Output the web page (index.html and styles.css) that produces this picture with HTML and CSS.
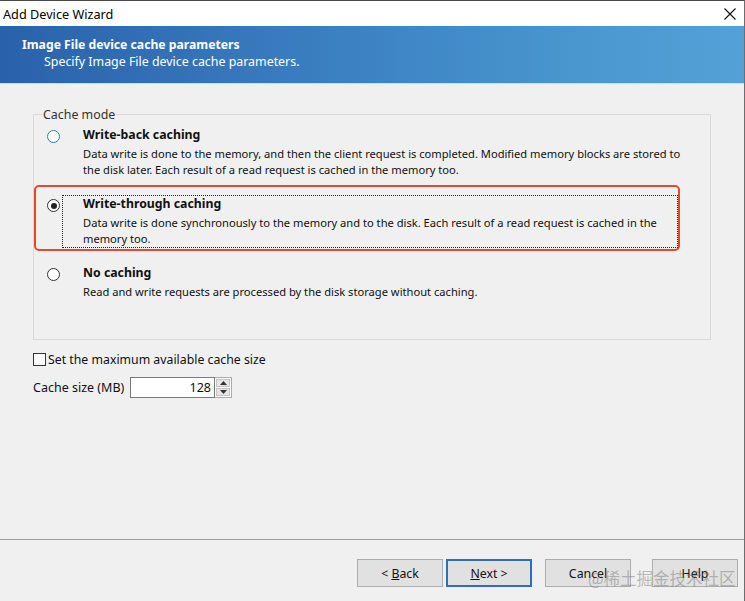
FILE: index.html
```html
<!DOCTYPE html>
<html>
<head>
<meta charset="utf-8">
<title>Add Device Wizard</title>
<link rel="stylesheet" href="styles.css">
</head>
<body>
<div class="window">
  <div class="titlebar">
    <span class="titlebar-text">Add Device Wizard</span>
    <svg class="close" width="12" height="12" viewBox="0 0 12 12"><path d="M0.5 0.5 L11.5 11.5 M11.5 0.5 L0.5 11.5" stroke="#111" stroke-width="1.1" fill="none"/></svg>
  </div>

  <div class="banner">
    <div class="banner-title">Image File device cache parameters</div>
    <div class="banner-sub">Specify Image File device cache parameters.</div>
  </div>

  <div class="content">
    <fieldset class="group">
      <legend>Cache mode</legend>
      <div class="options">
        <div class="option">
          <span class="radio radio-hover"></span>
          <div class="option-text">
            <div class="option-title">Write-back caching</div>
            <div class="option-desc">Data write is done to the memory, and then the client request is completed. Modified memory blocks are stored to<br>the disk later. Each result of a read request is cached in the memory too.</div>
          </div>
        </div>
        <div class="option option-marked">
          <span class="radio radio-checked"></span>
          <div class="option-text option-focus">
            <div class="option-title">Write-through caching</div>
            <div class="option-desc">Data write is done synchronously to the memory and to the disk. Each result of a read request is cached in the<br>memory too.</div>
          </div>
        </div>
        <div class="option">
          <span class="radio"></span>
          <div class="option-text">
            <div class="option-title">No caching</div>
            <div class="option-desc">Read and write requests are processed by the disk storage without caching.</div>
          </div>
        </div>
      </div>
    </fieldset>

    <div class="check-row">
      <span class="checkbox"></span>
      <span>Set the maximum available cache size</span>
    </div>

    <div class="size-row">
      <span class="size-label">Cache size (MB)</span>
      <span class="spin-input">128</span>
      <span class="spinner">
        <span class="spin-btn"><svg width="7" height="4" viewBox="0 0 7 4"><path d="M0 4 L3.5 0 L7 4 Z" fill="#333"/></svg></span>
        <span class="spin-btn"><svg width="7" height="4" viewBox="0 0 7 4"><path d="M0 0 L3.5 4 L7 0 Z" fill="#333"/></svg></span>
      </span>
    </div>
  </div>

  <div class="footer">
    <button class="btn">&lt; <u>B</u>ack</button>
    <button class="btn btn-default"><u>N</u>ext &gt;</button>
    <button class="btn btn-cancel">Cancel</button>
    <button class="btn btn-help">Help</button>
    <span class="watermark">@稀土掘金技术社区</span>
  </div>
</div>
</body>
</html>
```

FILE: styles.css
```css
html, body { margin: 0; padding: 0; }
body {
  width: 745px;
  height: 601px;
  overflow: hidden;
  background: #f0f0f0;
  font-family: "Noto Sans", "Open Sans", sans-serif;
  font-size: 11px;
  color: #111;
}

.window {
  position: relative;
  height: 601px;
  box-sizing: border-box;
  display: flex;
  flex-direction: column;
  border-top: 1px solid #4a4a4a;
  border-right: 1px solid #6d6d6d;
}

/* title bar */
.titlebar {
  height: 25px;
  background: #fff;
  display: flex;
  align-items: center;
  justify-content: space-between;
  padding: 0 8px 0 3px;
}
.titlebar-text { font-size: 12.7px; color: #000; }
.close { margin-top: 1px; }

/* blue header */
.banner {
  height: 58px;
  box-sizing: border-box;
  padding: 11px 0 0 22px;
  color: #fff;
  background: linear-gradient(90deg, #2a62aa 0%, #3472b8 25%, #3f87c6 55%, #4b98d0 80%, #53a1d6 100%);
  border-bottom: 1px solid #dadada;
}
.banner-title { font-weight: bold; font-size: 12.2px; line-height: 16px; }
.banner-sub { padding-left: 22px; line-height: 17px; font-size: 12.4px; }

.content {
  flex: 1;
  padding: 23px 0 0 33px;
}

/* group box */
.group {
  margin: 0;
  padding: 0 0 32px 0;
  width: 678px;
  box-sizing: border-box;
  border: 1px solid #d9d9d9;
}
.group legend {
  margin-left: 8px;
  padding: 0 1px;
  font-size: 12.4px;
  line-height: 15px;
  color: #333;
}
.options { margin-top: -6px; }

.option {
  display: grid;
  grid-template-columns: 26px auto;
  align-items: start;
  border: 2px solid transparent;
  border-radius: 5px;
  padding: 8px 0 1px 0;
  margin-bottom: 3px;
  width: max-content;
}
.option-marked {
  width: 646px;
  box-sizing: border-box;
  border-color: #e04b2d;
}

.radio {
  width: 13px;
  height: 13px;
  box-sizing: border-box;
  margin: 4px 0 0 11px;
  border: 1px solid #333;
  border-radius: 50%;
  background: #fff;
  position: relative;
}
.radio-hover { border-color: #2f7bc4; }
.radio-checked::after {
  content: "";
  position: absolute;
  left: 2.5px;
  top: 2.5px;
  width: 6px;
  height: 6px;
  border-radius: 50%;
  background: #222;
}

.option-text {
  border: 1px dotted transparent;
  padding: 0 1px 0 20px;
}
.option-focus { border-color: #222; }
.option-title {
  font-weight: bold;
  font-size: 12.3px;
  line-height: 15px;
}
.option-desc {
  margin-top: 4px;
  font-size: 11.15px;
  line-height: 16px;
  white-space: nowrap;
}

/* cache size controls */
.check-row {
  display: flex;
  align-items: center;
  margin-top: 11px;
  height: 16px;
  font-size: 12.3px;
}
.checkbox {
  width: 13px;
  height: 13px;
  box-sizing: border-box;
  border: 1px solid #333;
  background: #fff;
  margin-right: 2px;
}

.size-row {
  display: flex;
  align-items: center;
  margin-top: 10px;
  height: 21px;
  font-size: 12.5px;
}
.size-label { width: 97px; }
.spin-input {
  width: 85px;
  height: 21px;
  box-sizing: border-box;
  border: 1px solid #7a7a7a;
  background: #fff;
  text-align: right;
  padding-right: 3px;
  line-height: 19px;
  font-size: 12.5px;
}
.spinner {
  display: flex;
  flex-direction: column;
  width: 17px;
  height: 21px;
  box-sizing: border-box;
  border: 1px solid #acacac;
  border-left: none;
  background: #fff;
}
.spin-btn {
  flex: 1;
  display: flex;
  align-items: center;
  justify-content: center;
  background: #e6e6e6;
  margin: 1px 1px 0 1px;
  border: 1px solid #c4c4c4;
}
.spin-btn + .spin-btn { margin-bottom: 1px; }

/* bottom buttons */
.footer {
  position: relative;
  height: 62px;
  box-sizing: border-box;
  border-top: 1px solid #a0a0a0;
  display: flex;
  justify-content: flex-end;
  align-items: flex-start;
  padding: 19px 6px 0 0;
}
.btn {
  width: 86px;
  height: 28px;
  box-sizing: border-box;
  background: #e1e1e1;
  border: 1px solid #adadad;
  font-family: "Noto Sans", "Open Sans", sans-serif;
  font-size: 12.3px;
  color: #111;
  padding: 0;
  margin-left: 3px;
}
.btn-default { border: 2px solid #2f6fb4; }
.btn-cancel { margin-left: 13px; }
.btn-help { margin-left: 21px; }

.watermark {
  position: absolute;
  left: 588px;
  top: 28px;
  font-family: "Noto Sans CJK SC", sans-serif;
  font-size: 16.5px;
  line-height: 20px;
  color: rgba(110, 110, 110, 0.45);
  white-space: nowrap;
}
```
